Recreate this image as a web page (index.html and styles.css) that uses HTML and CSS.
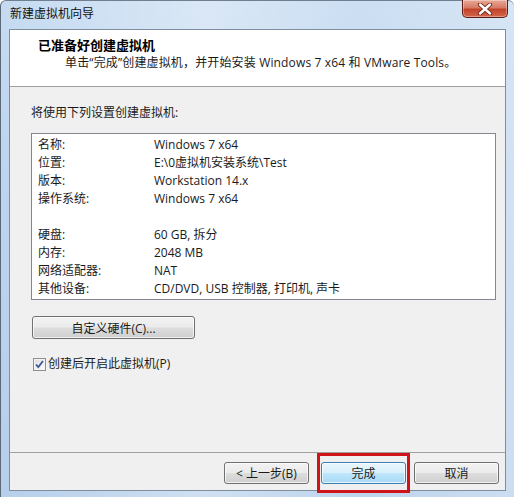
FILE: index.html
```html
<!DOCTYPE html>
<html lang="zh-CN">
<head>
  <meta charset="UTF-8">
  <meta name="viewport" content="width=device-width, initial-scale=1.0">
  <title>新建虚拟机向导</title>
  <link rel="stylesheet" href="styles.css">
</head>
<body>
  <div class="window">
    <div class="titlebar">
      <span class="title">新建虚拟机向导</span>
      <button class="close" aria-label="关闭">
        <svg viewBox="0 0 16 12" width="16" height="12">
          <path d="M3 1.5l10 9M13 1.5l-10 9" stroke="#6b2218" stroke-width="4.2" stroke-linecap="round" />
          <path d="M3 1.5l10 9M13 1.5l-10 9" stroke="#fff" stroke-width="2.4" stroke-linecap="round" />
        </svg>
      </button>
    </div>

    <div class="client">
      <div class="header">
        <h1>已准备好创建虚拟机</h1>
        <p>单击“完成”创建虚拟机，并开始安装 Windows 7 x64 和 VMware Tools。</p>
      </div>

      <div class="content">
        <div class="intro">将使用下列设置创建虚拟机:</div>
        <div class="summary">
          <div class="row"><span class="key">名称:</span><span>Windows 7 x64</span></div>
          <div class="row"><span class="key">位置:</span><span>E:\0虚拟机安装系统\Test</span></div>
          <div class="row"><span class="key">版本:</span><span>Workstation 14.x</span></div>
          <div class="row"><span class="key">操作系统:</span><span>Windows 7 x64</span></div>
          <div class="row"></div>
          <div class="row"><span class="key">硬盘:</span><span>60 GB, 拆分</span></div>
          <div class="row"><span class="key">内存:</span><span>2048 MB</span></div>
          <div class="row"><span class="key">网络适配器:</span><span>NAT</span></div>
          <div class="row"><span class="key">其他设备:</span><span>CD/DVD, USB 控制器, 打印机, 声卡</span></div>
        </div>
        <button class="btn btn-hw">自定义硬件(C)...</button>
        <label class="check">
          <span class="box">
            <svg viewBox="0 0 9 9" width="9" height="9">
              <path d="M1 4.5l2.3 2.6L8 1" fill="none" stroke="#3c5a9a" stroke-width="1.8" />
            </svg>
          </span>
          创建后开启此虚拟机(P)
        </label>
      </div>

      <div class="footer">
        <button class="btn btn-back">&lt; 上一步(B)</button>
        <button class="btn btn-finish">完成</button>
        <button class="btn btn-cancel">取消</button>
      </div>
    </div>

    <div class="mark"></div>
  </div>
</body>
</html>
```

FILE: styles.css
```css
* {
  box-sizing: border-box;
}

body {
  margin: 0;
  font-family: "Open Sans", "Noto Sans CJK SC", sans-serif;
  font-size: 12px;
  color: #1a1a1a;
  background: #fff;
}

.window {
  position: relative;
  width: 514px;
  height: 497px;
  display: flex;
  flex-direction: column;
  padding: 0 8px 6px 8px;
  border-left: 1px solid #5b6878;
  border-top: 1px solid #6f7f90;
  border-radius: 6px 6px 0 0;
  background:
    linear-gradient(90deg, rgba(255, 255, 255, 0) 0%, rgba(255, 255, 255, 0.35) 40%, rgba(255, 255, 255, 0.1) 70%, rgba(255, 255, 255, 0.3) 100%),
    linear-gradient(180deg, #c6dbf1 0%, #bcd4ee 40%, #b6cfea 100%);
}

/* title bar */

.titlebar {
  height: 28px;
  display: flex;
  justify-content: space-between;
  align-items: flex-start;
}

.title {
  margin-top: 4px;
  margin-left: 1px;
  font-size: 12px;
  line-height: 18px;
  color: #111;
}

.close {
  width: 46px;
  height: 18px;
  margin-top: -1px;
  margin-right: -2px;
  padding: 0;
  display: flex;
  align-items: center;
  justify-content: center;
  border: 1px solid #5e1d14;
  border-top: none;
  border-radius: 0 0 5px 5px;
  background: linear-gradient(180deg, #e9a896 0%, #d77b65 45%, #c2432a 55%, #d4664a 100%);
  box-shadow: inset 0 0 0 1px rgba(255, 255, 255, 0.35);
}

/* client area */

.client {
  flex: 1;
  display: flex;
  flex-direction: column;
  border: 1px solid #7d8ea0;
  background: #f0f0f0;
}

.header {
  height: 57px;
  padding: 7px 0 0 28px;
  background: #fff;
  border-bottom: 1px solid #a0a0a0;
}

.header h1 {
  margin: 0;
  font-size: 13px;
  font-weight: bold;
  line-height: 17px;
  color: #000;
}

.header p {
  margin: 0 0 0 27px;
  line-height: 17px;
  letter-spacing: 0.15px;
  color: #1a1a1a;
}

.content {
  flex: 1;
  padding: 18px 9px 0 21px;
  display: flex;
  flex-direction: column;
  align-items: flex-start;
}

.intro {
  line-height: 16px;
}

.summary {
  align-self: stretch;
  margin-top: 12px;
  padding: 2px 0 1px 6px;
  background: #fff;
  border: 1px solid #828790;
}

.row {
  height: 18px;
  line-height: 18px;
  display: flex;
  white-space: nowrap;
}

.key {
  width: 116px;
}

/* push buttons */

.btn {
  height: 22px;
  padding: 0;
  font-family: inherit;
  font-size: 12px;
  color: #1a1a1a;
  border: 1px solid #707070;
  border-radius: 3px;
  background: linear-gradient(180deg, #f2f2f2 0%, #ebebeb 48%, #dddddd 52%, #cfcfcf 100%);
  box-shadow: inset 0 0 0 1px rgba(255, 255, 255, 0.7);
}

.btn-hw {
  width: 163px;
  height: 23px;
  margin: 16px 0 0 1px;
}

.check {
  margin-top: 17px;
  margin-left: 2px;
  display: flex;
  align-items: center;
  gap: 2px;
  line-height: 16px;
}

.box {
  width: 13px;
  height: 13px;
  display: flex;
  align-items: center;
  justify-content: center;
  border: 1px solid #8e8f8f;
  background: linear-gradient(135deg, #dcdcdc, #fdfdfd);
  box-shadow: inset 0 0 0 1px #f4f4f4;
}

.footer {
  height: 38px;
  padding: 9px 6px 0 0;
  display: flex;
  justify-content: flex-end;
  align-items: flex-start;
  border-top: 1px solid #a0a0a0;
}

.footer .btn {
  width: 85px;
}

.btn-back {
  margin-right: 12px;
}

.btn-finish {
  margin-right: 8px;
  border-color: #3c7fb1;
  background: linear-gradient(180deg, #eaf6fd 0%, #d9f0fc 48%, #bee6fd 52%, #a7d9f5 100%);
}

/* highlight frame drawn over the finish button */

.mark {
  position: absolute;
  left: 316px;
  top: 452px;
  width: 93px;
  height: 40px;
  border: 3px solid #d0121b;
}
```
